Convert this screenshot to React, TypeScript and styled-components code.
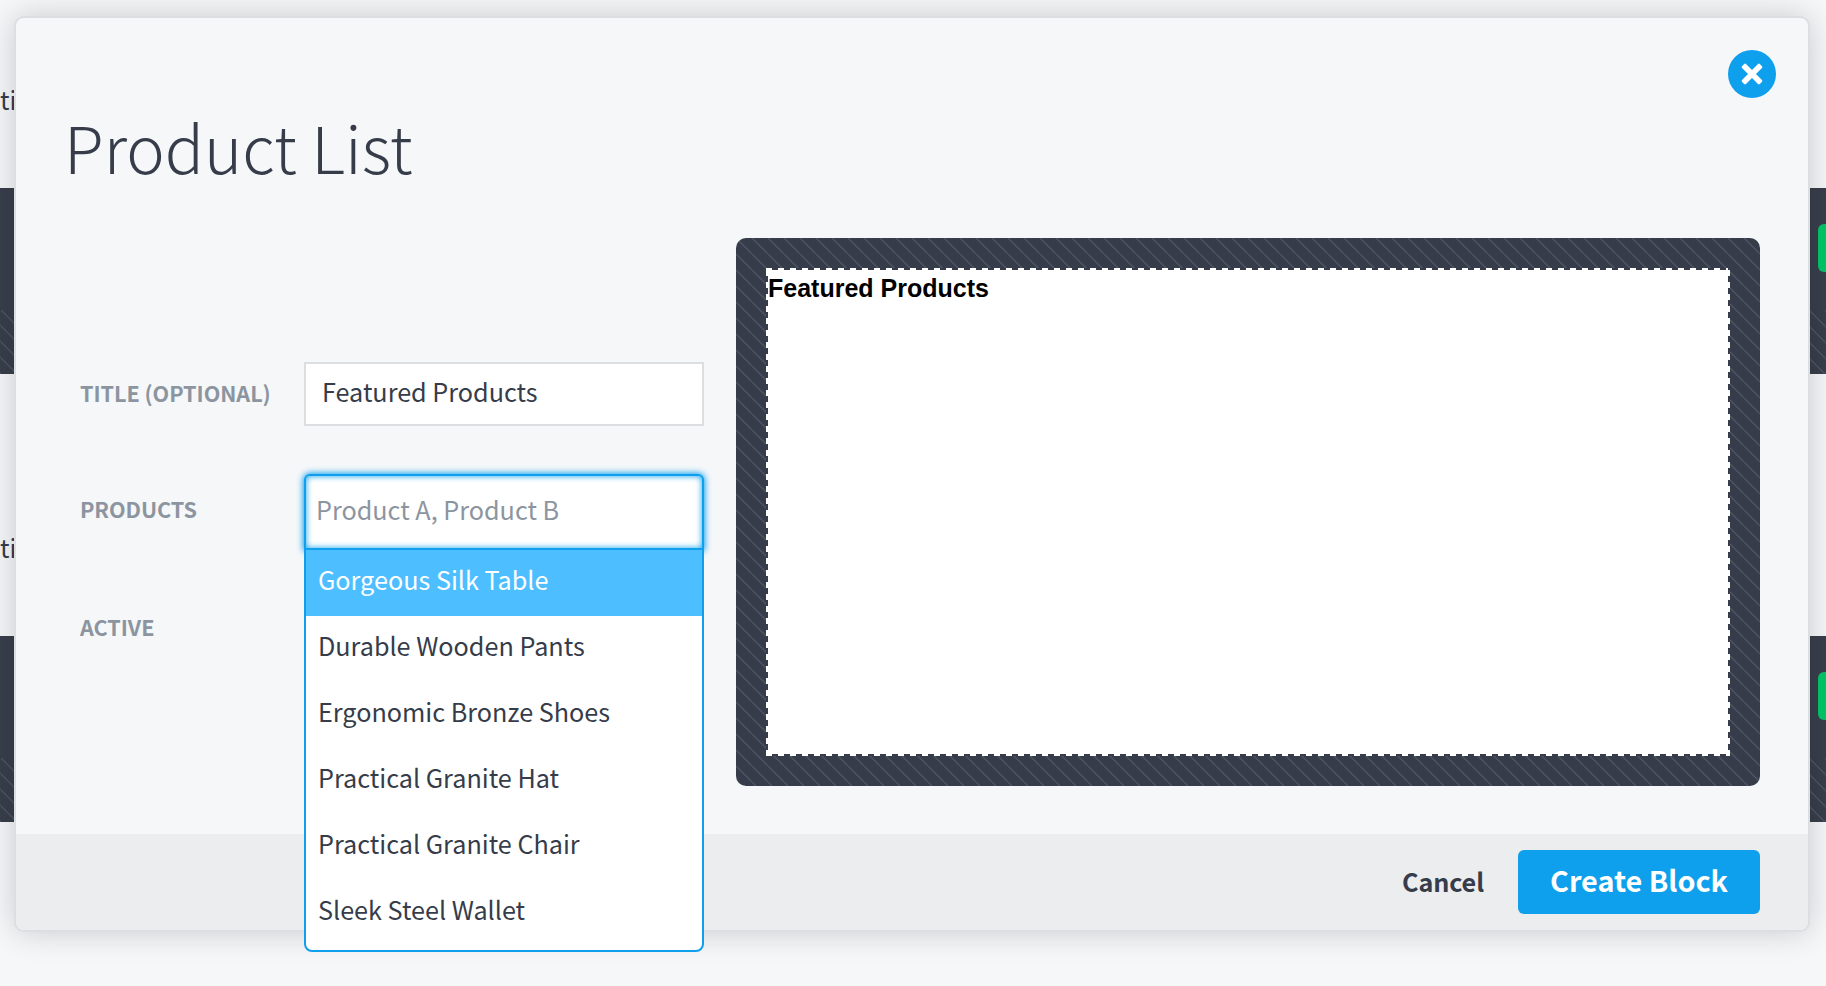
import React from 'react';
import styled, { createGlobalStyle } from 'styled-components';

const ink = '#363c49';
const blue = '#0e9fed';
const sans = `"Noto Sans CJK JP", "Noto Sans CJK SC", "Noto Sans", sans-serif`;

const hatch = `linear-gradient(45deg, transparent 45.5%, #4f5663 48.5%, #4f5663 51.5%, transparent 54.5%)`;

const GlobalStyle = createGlobalStyle`
  *, *::before, *::after { box-sizing: border-box; }
  body {
    margin: 0;
    background: #f5f7f9;
    color: ${ink};
    font-family: ${sans};
    overflow: hidden;
    -webkit-font-smoothing: antialiased;
  }
`;

const Page = styled.div`
  position: relative;
  height: 986px;
  overflow: hidden;
`;

const Section = styled.section`
  height: 448px;
  padding-top: 78px;
`;

const SectionLabel = styled.div`
  height: 110px;
  font-size: 25.2px;
  line-height: 42px;
`;

const Band = styled.div`
  display: flex;
  flex-direction: column;
  justify-content: space-between;
  height: 186px;
  padding-top: 36px;
  background: #383f4c;
`;

const BandAction = styled.div`
  align-self: flex-end;
  width: 8px;
  height: 48px;
  border-radius: 6px 0 0 6px;
  background: #00c86a;
`;

const BandHatch = styled.div`
  height: 64px;
  background: ${hatch} 1px 0 / 16px 16px;
`;

const Modal = styled.div`
  position: absolute;
  top: 16px;
  left: 14px;
  display: flex;
  flex-direction: column;
  width: 1796px;
  height: 916px;
  border: 2px solid #dcdfe2;
  border-radius: 10px;
  background: #f5f7f9;
  background-clip: padding-box;
  box-shadow: 0 0 32px rgba(0, 0, 0, 0.18);
`;

const ModalHeader = styled.header`
  display: flex;
  justify-content: space-between;
  height: 220px;
  padding: 32px 32px 0 48px;
`;

const Title = styled.h1`
  margin: 0;
  padding-top: 48px;
  font-size: 64.8px;
  line-height: 96px;
  font-weight: 300;
  letter-spacing: 0.05px;
`;

const CloseButton = styled.button`
  display: flex;
  align-items: center;
  justify-content: center;
  width: 48px;
  height: 48px;
  padding: 0;
  border: 0;
  border-radius: 50%;
  background: ${blue};
`;

const Columns = styled.div`
  display: flex;
  flex: 1;
  justify-content: space-between;
  padding: 0 48px 0 64px;
`;

const Form = styled.div`
  display: flex;
  flex-direction: column;
  gap: 48px;
  width: 624px;
  padding-top: 124px;
`;

const Field = styled.div<{ $height: number }>`
  display: flex;
  align-items: center;
  justify-content: space-between;
  height: ${(p) => p.$height}px;
`;

const Label = styled.label<{ $lift?: number }>`
  padding-bottom: ${(p) => p.$lift ?? 3}px;
  color: #8c959f;
  font-size: 21.6px;
  line-height: 32px;
  font-weight: 700;
  letter-spacing: -0.05px;
  white-space: nowrap;
`;

const TextField = styled.div`
  width: 400px;
  height: 64px;
  padding: 9px 16px;
  border: 2px solid #dcdfe2;
  background: #fff;
  font-size: 25.2px;
  line-height: 36px;
`;

const Combo = styled.div`
  position: relative;
  width: 400px;
  height: 76px;
`;

const ComboInput = styled.div`
  height: 76px;
  padding: 15px 10px;
  border: 2px solid ${blue};
  border-radius: 6px 6px 0 0;
  background: #fff;
  box-shadow: 0 0 6px 1px ${blue}, inset 0 0 6px ${blue};
  color: #8c959f;
  font-size: 25.2px;
  line-height: 36px;
`;

const Menu = styled.ul`
  position: absolute;
  z-index: 2;
  top: 74px;
  left: 0;
  width: 400px;
  margin: 0;
  padding: 0 0 4px;
  border: 2px solid ${blue};
  border-radius: 0 0 8px 8px;
  background: #fff;
  list-style: none;
`;

const Option = styled.li<{ $active?: boolean }>`
  height: 66px;
  padding: 11px 12px;
  background: ${(p) => (p.$active ? '#4dbeff' : 'transparent')};
  color: ${(p) => (p.$active ? '#fff' : ink)};
  font-size: 25.2px;
  line-height: 36px;
`;

const Preview = styled.div`
  width: 1024px;
  height: 548px;
  padding: 30px;
  border-radius: 10px;
  background: ${hatch} 0 0 / 16px 16px, ${ink};
`;

const dashX = `repeating-linear-gradient(90deg, transparent 0 6px, ${ink} 6px 12px)`;
const dashY = `repeating-linear-gradient(180deg, ${ink} 0 2px, transparent 2px 8px, ${ink} 8px 12px)`;

const PreviewFrame = styled.div`
  height: 488px;
  padding: 2px;
  background:
    linear-gradient(#fff, #fff) 0 0 / 6px 8px no-repeat,
    ${dashX} 0 0 / 100% 2px no-repeat,
    ${dashX} 0 100% / 100% 2px no-repeat,
    ${dashY} 0 0 / 2px 100% no-repeat,
    ${dashY} 100% 0 / 2px 100% no-repeat,
    #fff;
`;

const PreviewTitle = styled.h3`
  margin: 3px 0 0;
  color: #000;
  font: 700 25px/30px "Liberation Sans", Arial, sans-serif;
`;

const Footer = styled.footer`
  display: flex;
  align-items: center;
  justify-content: flex-end;
  gap: 34px;
  height: 96px;
  padding-right: 48px;
  border-radius: 0 0 8px 8px;
  background: #ebedef;
`;

const CancelButton = styled.button`
  padding: 0 0 2px;
  border: 0;
  background: none;
  color: ${ink};
  font: 700 25.2px/36px ${sans};
  letter-spacing: -0.1px;
`;

const SubmitButton = styled.button`
  width: 242px;
  height: 64px;
  padding: 0 0 5px;
  border: 0;
  border-radius: 6px;
  background: ${blue};
  color: #fff;
  font: 700 28.8px/40px ${sans};
`;

const products = [
  'Gorgeous Silk Table',
  'Durable Wooden Pants',
  'Ergonomic Bronze Shoes',
  'Practical Granite Hat',
  'Practical Granite Chair',
  'Sleek Steel Wallet',
];

const CloseIcon = () => (
  <svg width="24" height="24" viewBox="-12 -12 24 24" fill="#fff" aria-hidden="true">
    <rect x="-12.6" y="-2.8" width="25.2" height="5.6" rx="1.3" transform="rotate(45)" />
    <rect x="-12.6" y="-2.8" width="25.2" height="5.6" rx="1.3" transform="rotate(-45)" />
  </svg>
);

const BlockSection = () => (
  <Section>
    <SectionLabel>ti</SectionLabel>
    <Band>
      <BandAction />
      <BandHatch />
    </Band>
  </Section>
);

export default function App() {
  return (
    <Page>
      <GlobalStyle />
      <BlockSection />
      <BlockSection />
      <Modal role="dialog">
        <ModalHeader>
          <Title>Product List</Title>
          <CloseButton aria-label="Close">
            <CloseIcon />
          </CloseButton>
        </ModalHeader>
        <Columns>
          <Form>
            <Field $height={64}>
              <Label>TITLE (OPTIONAL)</Label>
              <TextField>Featured Products</TextField>
            </Field>
            <Field $height={76}>
              <Label $lift={7}>PRODUCTS</Label>
              <Combo>
                <ComboInput>Product A, Product B</ComboInput>
                <Menu>
                  {products.map((name, i) => (
                    <Option key={name} $active={i === 0}>
                      {name}
                    </Option>
                  ))}
                </Menu>
              </Combo>
            </Field>
            <Field $height={64}>
              <Label $lift={7}>ACTIVE</Label>
            </Field>
          </Form>
          <Preview>
            <PreviewFrame>
              <PreviewTitle>Featured Products</PreviewTitle>
            </PreviewFrame>
          </Preview>
        </Columns>
        <Footer>
          <CancelButton>Cancel</CancelButton>
          <SubmitButton>Create Block</SubmitButton>
        </Footer>
      </Modal>
    </Page>
  );
}
